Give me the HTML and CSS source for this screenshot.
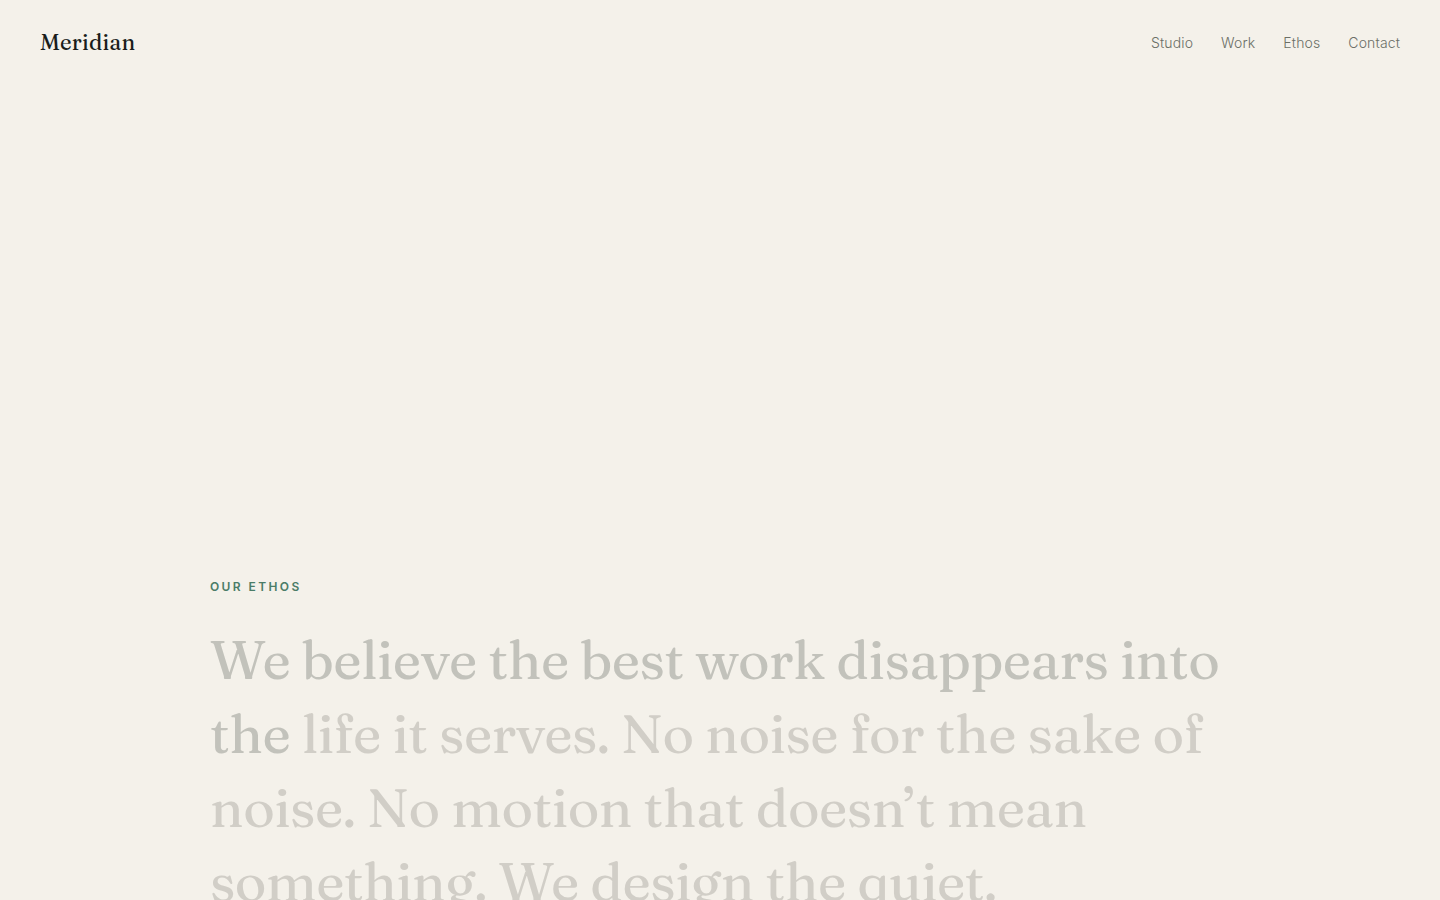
FILE: index.html
```html
<!DOCTYPE html>
<html lang="en">
<head>
  <meta charset="UTF-8">
  <meta name="viewport" content="width=device-width, initial-scale=1">
  <title>Meridian</title>
  <link rel="stylesheet" href="styles.css">
</head>
<body>
  <header class="nav">
    <a class="brand" href="#">Meridian</a>
    <nav class="links">
      <a href="#studio">Studio</a>
      <a href="#work">Work</a>
      <a href="#ethos">Ethos</a>
      <a href="#contact">Contact</a>
    </nav>
  </header>

  <main>
    <section class="ethos" id="ethos">
      <p class="eyebrow">Our ethos</p>
      <h2 class="statement"><span class="lit">We believe the best work disappears into the</span> life it serves. No noise for the sake of noise. No motion that doesn’t mean something. We design the quiet.</h2>
    </section>
  </main>
</body>
</html>
```

FILE: styles.css
```css
* {
  box-sizing: border-box;
}
body {
  margin: 0;
  background: #f4f1ea;
  color: #1a1d1a;
  font-family: Inter, sans-serif;
}
a {
  color: inherit;
  text-decoration: none;
}

.nav {
  display: flex;
  justify-content: space-between;
  align-items: center;
  padding: 28px 40px;
}
.brand {
  font-family: Fraunces, "Liberation Serif", serif;
  font-size: 22px;
  font-weight: 400;
  line-height: 29px;
  letter-spacing: 0.01em;
}
.links {
  display: flex;
  gap: 28px;
  font-size: 14px;
  font-weight: 300;
  line-height: 20px;
  letter-spacing: 0.01em;
  color: #6b6f66;
}

.ethos {
  max-width: 1020px;
  margin: 0 auto;
  padding: 492px 0 160px;
}
.eyebrow {
  margin: 0 0 26px;
  font-size: 12px;
  font-weight: 600;
  line-height: 20px;
  letter-spacing: 0.2em;
  text-transform: uppercase;
  color: #4a7c67;
}
.statement {
  margin: 0;
  font-family: Fraunces, "Liberation Serif", serif;
  font-size: 54px;
  font-weight: 400;
  line-height: 74px;
  letter-spacing: -0.01em;
  color: #d1cec7;
}
.lit {
  color: #c2c2bb;
}
```
